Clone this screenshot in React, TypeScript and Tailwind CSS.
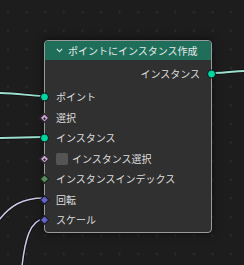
import React from 'react';

type SocketKind = 'geo' | 'bool' | 'int' | 'vec';

const inputs: { label: string; kind: SocketKind; check?: boolean }[] = [
    { label: 'ポイント', kind: 'geo' },
    { label: '選択', kind: 'bool' },
    { label: 'インスタンス', kind: 'geo' },
    { label: 'インスタンス選択', kind: 'bool', check: true },
    { label: 'インスタンスインデックス', kind: 'int' },
    { label: '回転', kind: 'vec' },
    { label: 'スケール', kind: 'vec' },
];

function Socket({ kind, side }: { kind: SocketKind; side: 'left' | 'right' }) {
    const pos = side === 'left' ? 'left-[-5px]' : 'right-[-5px]';
    if (kind === 'geo') {
        return <div className={`absolute ${pos} top-1/2 -translate-y-1/2 w-[9px] h-[9px] rounded-full bg-[#00d6a3] border border-[#111]`} />;
    }
    const color = kind === 'bool' ? 'bg-[#cca6d6]' : kind === 'int' ? 'bg-[#598c5c]' : 'bg-[#6363c7]';
    return (
        <div className={`absolute ${pos} top-1/2 -translate-y-1/2 w-[9px] h-[9px] flex items-center justify-center`}>
            <div className={`w-[7px] h-[7px] rotate-45 ${color} border border-[#111] flex items-center justify-center`}>
                {kind === 'bool' && <div className="w-[2px] h-[2px] bg-[#222]" />}
            </div>
        </div>
    );
}

export default function App() {
    return (
        <div
            className="relative w-[244px] h-[265px] overflow-hidden bg-[#1d1d1d] bg-[radial-gradient(#2b2b2b_1px,transparent_1.3px)] bg-size-[18.6px_18.6px] bg-position-[-1.3px_3px]"
            style={{ fontFamily: '"Noto Sans CJK JP", "Noto Sans", sans-serif' }}
        >
            {/* wires */}
            <svg className="absolute inset-0" width="244" height="265" fill="none">
                <path d="M212,73 C228,73 234,71 244,71" stroke="#0c0c0c" strokeWidth="3.5" />
                <path d="M212,73 C228,73 234,71 244,71" stroke="#9ee0cf" strokeWidth="2" />
                <path d="M0,93 C20,93 28,96 44,96" stroke="#0c0c0c" strokeWidth="3.5" />
                <path d="M0,93 C20,93 28,96 44,96" stroke="#9ee0cf" strokeWidth="2" />
                <path d="M0,138 L44,137" stroke="#0c0c0c" strokeWidth="3.5" />
                <path d="M0,138 L44,137" stroke="#9ee0cf" strokeWidth="2" />
                <path d="M44,198 C22,198 10,206 -1,220" stroke="#0c0c0c" strokeWidth="3" />
                <path d="M44,198 C22,198 10,206 -1,220" stroke="#c9c9e6" strokeWidth="1.5" />
                <path d="M44,219 C30,220 25,240 22,266" stroke="#0c0c0c" strokeWidth="3" />
                <path d="M44,219 C30,220 25,240 22,266" stroke="#c9c9e6" strokeWidth="1.5" />
            </svg>

            {/* node */}
            <div className="absolute left-[44px] top-[40px] w-[168px] h-[193px] rounded-[4px] bg-[#303030] border border-[#9a9a9a] shadow-[0_0_10px_rgba(0,0,0,0.6)] flex flex-col text-[10px] leading-none text-[#dddddd]">
                <div className="h-[19px] shrink-0 rounded-t-[3px] bg-[#1f6e5a] flex items-center pl-[11px] gap-[5px]">
                    <svg width="7" height="5" viewBox="0 0 7 5" fill="none">
                        <path d="M0.8,0.8 L3.5,3.6 L6.2,0.8" stroke="#cfe3dd" strokeWidth="1.2" />
                    </svg>
                    <span className="text-[#e8e8e8]">ポイントにインスタンス作成</span>
                </div>
                <div className="relative h-[20px] mt-[4px] flex items-center justify-end pr-[11px]">
                    <span>インスタンス</span>
                    <Socket kind="geo" side="right" />
                </div>
                <div className="flex flex-col mt-[3px]">
                    {inputs.map((row) => (
                        <div key={row.label} className="relative h-[20.5px] flex items-center pl-[11px] gap-[4px]">
                            <Socket kind={row.kind} side="left" />
                            {row.check && <div className="w-[12px] h-[12px] rounded-[2px] bg-[#545454]" />}
                            <span>{row.label}</span>
                        </div>
                    ))}
                </div>
            </div>
        </div>
    );
}
